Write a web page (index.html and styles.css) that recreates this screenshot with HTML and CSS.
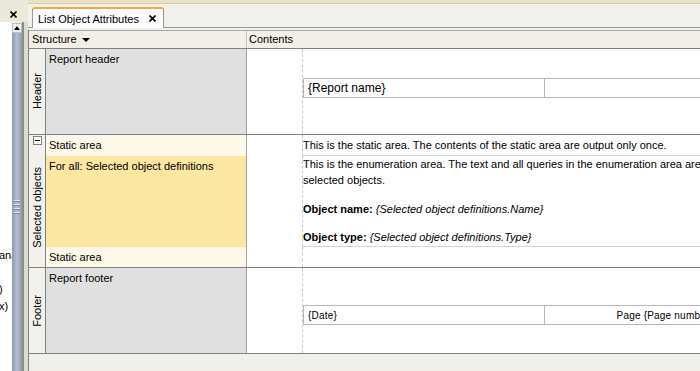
FILE: index.html
```html
<!DOCTYPE html>
<html>
<head>
<meta charset="utf-8">
<link rel="stylesheet" href="styles.css">
</head>
<body>
<div class="app">
  <aside class="side">
    <div class="side-head">
      <svg class="xicon" width="7" height="7" viewBox="0 0 7 7"><path d="M0.5 0.5L6.5 6.5M6.5 0.5L0.5 6.5" stroke="#000" stroke-width="1.6"/></svg>
    </div>
    <div class="side-body">
      <div class="side-list">
        <div class="li li-first">ana</div>
        <div class="li"></div>
        <div class="li">)</div>
        <div class="li">x)</div>
      </div>
      <div class="vscroll">
        <div class="sb-btn"><svg width="6" height="4" viewBox="0 0 6 4"><polygon points="3,0 6,4 0,4" fill="#000"/></svg></div>
        <div class="sb-thumb"><div class="grip"></div></div>
      </div>
      <div class="splitter"></div>
    </div>
  </aside>
  <main class="main">
    <div class="tabbar">
      <div class="strip"></div>
      <div class="tabrow">
        <div class="tab">
          <span>List Object Attributes</span>
          <svg width="7" height="7" viewBox="0 0 7 7"><path d="M0.5 0.5L6.5 6.5M6.5 0.5L0.5 6.5" stroke="#000" stroke-width="1.6"/></svg>
        </div>
      </div>
    </div>
    <div class="grid">
      <div class="colhead">
        <div class="ch-struct">Structure <svg class="tri" width="8" height="4" viewBox="0 0 8 4"><polygon points="0,0 8,0 4,4" fill="#000"/></svg></div>
        <div class="ch-contents">Contents</div>
      </div>

      <section class="sec sec-band">
        <div class="lbl"><span class="vtext">Header</span></div>
        <div class="rows">
          <div class="row row-band">
            <div class="struct gray">Report header</div>
            <div class="content">
              <div class="gutter"></div>
              <div class="body body-head">
                <table class="itable">
                  <tr><td class="c1 big">{Report name}</td><td class="c2"></td></tr>
                </table>
              </div>
            </div>
          </div>
        </div>
      </section>

      <section class="sec">
        <div class="lbl lbl-sel">
          <div class="minus"></div>
          <div class="vwrap"><span class="vtext">Selected objects</span></div>
        </div>
        <div class="rows">
          <div class="row">
            <div class="struct cream">Static area</div>
            <div class="content">
              <div class="gutter"></div>
              <div class="body body-line divided">This is the static area. The contents of the static area are output only once.</div>
            </div>
          </div>
          <div class="row">
            <div class="struct yellow">For all: Selected object definitions</div>
            <div class="content">
              <div class="gutter"></div>
              <div class="body body-enum divided">
                <p class="p1">This is the enumeration area. The text and all queries in the enumeration area are output for all<br>selected objects.</p>
                <p class="p2"><b>Object name:</b> <i>{Selected object definitions.Name}</i></p>
                <p class="p3"><b>Object type:</b> <i>{Selected object definitions.Type}</i></p>
              </div>
            </div>
          </div>
          <div class="row">
            <div class="struct cream">Static area</div>
            <div class="content">
              <div class="gutter"></div>
              <div class="body body-line"></div>
            </div>
          </div>
        </div>
      </section>

      <section class="sec sec-band">
        <div class="lbl"><span class="vtext">Footer</span></div>
        <div class="rows">
          <div class="row row-band">
            <div class="struct gray">Report footer</div>
            <div class="content">
              <div class="gutter"></div>
              <div class="body body-foot">
                <table class="itable">
                  <tr><td class="c1 small">{Date}</td><td class="c2 small right">Page {Page number}</td></tr>
                </table>
              </div>
            </div>
          </div>
        </div>
      </section>

      <div class="filler"></div>
    </div>
  </main>
</div>
</body>
</html>
```

FILE: styles.css
```css
html, body {
  margin: 0;
  padding: 0;
}
body {
  width: 700px;
  height: 371px;
  overflow: hidden;
  font-family: "Liberation Sans", Arial, sans-serif;
  font-size: 11px;
  color: #000;
  background: #f1f0ea;
}
.app {
  display: flex;
  width: 700px;
  height: 371px;
}

/* side panel */
.side {
  width: 28px;
  display: flex;
  flex-direction: column;
  flex-shrink: 0;
}
.side-head {
  height: 22px;
  background: #ece9d8;
  display: flex;
  justify-content: flex-end;
  padding-right: 11px;
  padding-top: 11px;
  box-sizing: border-box;
}
.side-head .xicon {
  display: block;
}
.side-body {
  flex: 1;
  display: flex;
}
.side-list {
  width: 12px;
  background: #fff;
  overflow: hidden;
  white-space: nowrap;
  flex-shrink: 0;
}
.li {
  height: 17px;
  line-height: 17px;
  margin-left: -1px;
}
.li-first {
  margin-top: 225px;
}
.vscroll {
  width: 10px;
  display: flex;
  flex-direction: column;
  flex-shrink: 0;
}
.sb-btn {
  height: 10px;
  margin-top: 1px;
  background: #eef0f4;
  border: 1px solid #b8bfcc;
  box-sizing: border-box;
  display: flex;
  align-items: center;
  justify-content: center;
}
.sb-btn svg {
  display: block;
}
.sb-thumb {
  flex: 1;
  background: linear-gradient(to right, #8f99ad, #b6bfd0 50%, #8f99ad);
  display: flex;
  justify-content: center;
}
.grip {
  width: 6px;
  height: 14px;
  margin-top: 167px;
  background: repeating-linear-gradient(to bottom, #e4e8f0 0, #e4e8f0 1px, #7d879b 1px, #7d879b 2px, transparent 2px, transparent 4px);
}
.splitter {
  width: 4px;
  background: #dedbd2;
  border-left: 2px solid #8c8c8c;
  flex-shrink: 0;
}

/* main */
.main {
  flex: 1;
  display: flex;
  flex-direction: column;
  overflow: hidden;
  min-width: 0;
}
.tabbar {
  height: 27px;
  border-bottom: 1px solid #8e97a4;
  background: #f1f0ea;
  display: flex;
  flex-direction: column;
  flex-shrink: 0;
}
.strip {
  height: 3px;
  background: #ebe2c6;
  border-bottom: 1px solid #d4ccb4;
}
.tabrow {
  flex: 1;
  display: flex;
  align-items: flex-end;
  padding-left: 4px;
}
.tab {
  height: 21px;
  box-sizing: border-box;
  margin-bottom: -1px;
  border: 1px solid #919b9c;
  border-bottom: none;
  border-top: 2px solid #f2a93b;
  border-radius: 3px 3px 0 0;
  background: #fcfcfe;
  display: flex;
  align-items: center;
  gap: 10px;
  padding: 0 7px 0 5px;
  position: relative;
}
.tab svg {
  display: block;
}

.grid {
  flex: 1;
  display: flex;
  flex-direction: column;
  border-left: 1px solid #808080;
  margin-top: 2px;
}
.colhead {
  display: flex;
  height: 17px;
  border-top: 1px solid #a8a8a8;
  border-bottom: 1px solid #808080;
  background: #f1efe8;
  line-height: 17px;
  flex-shrink: 0;
}
.ch-struct {
  width: 214px;
  padding-left: 3px;
  border-right: 1px solid #c8c8c0;
  display: flex;
  align-items: center;
  gap: 5px;
  flex-shrink: 0;
}
.tri {
  display: block;
}
.ch-contents {
  padding-left: 2px;
}

.sec {
  display: flex;
  border-bottom: 1px solid #808080;
  flex-shrink: 0;
}
.lbl {
  width: 16px;
  flex-shrink: 0;
  border-right: 1px solid #808080;
  background: #f2f1ec;
  display: flex;
  align-items: center;
  justify-content: center;
}
.lbl-sel {
  flex-direction: column;
  align-items: stretch;
  justify-content: flex-start;
}
.minus {
  width: 9px;
  height: 9px;
  box-sizing: border-box;
  border: 1px solid #808080;
  background: #fff;
  margin: 1px 0 0 4px;
  position: relative;
}
.minus::after {
  content: "";
  position: absolute;
  left: 1px;
  right: 1px;
  top: 3px;
  height: 1px;
  background: #000;
}
.vwrap {
  flex: 1;
  display: flex;
  align-items: center;
  justify-content: center;
  padding-top: 2px;
}
.vtext {
  writing-mode: vertical-rl;
  transform: rotate(180deg);
  white-space: nowrap;
  line-height: 14px;
}
.rows {
  flex: 1;
  display: flex;
  flex-direction: column;
  min-width: 0;
}
.row {
  display: flex;
}
.row-band {
  height: 85px;
}
.struct {
  width: 194px;
  padding: 3px 3px;
  line-height: 14px;
  border-right: 1px solid #a0a0a0;
  flex-shrink: 0;
}
.gray { background: #e0e0e0; }
.cream { background: #fdf8e8; }
.yellow { background: #fbe6a2; }

.content {
  flex: 1;
  display: flex;
  background: #fff;
  min-width: 0;
}
.gutter {
  width: 55px;
  border-right: 1px dashed #c8c8c8;
  flex-shrink: 0;
}
.body {
  flex: 1;
  white-space: nowrap;
  overflow: hidden;
  min-width: 0;
}
.divided {
  border-bottom: 1px solid #d4d4d4;
}
.body-line {
  height: 20px;
  line-height: 20px;
}
.body-enum {
  height: 89px;
  padding-bottom: 1px;
  box-sizing: content-box;
}
.body-enum p {
  margin: 0;
  line-height: 16px;
}
.body-enum .p2 { margin-top: 13px; }
.body-enum .p3 { margin-top: 12px; }

.body-head { padding-top: 29px; }
.body-foot { padding-top: 37px; }

.itable {
  border-collapse: collapse;
  width: 415px;
  table-layout: fixed;
}
.itable td {
  border: 1px solid #b8b8b8;
  height: 18px;
  padding: 0 4px;
  white-space: nowrap;
}
.itable .c1 { width: 232px; }
.big { font-size: 12px; }
.small { font-size: 10px; letter-spacing: 0.2px; }
.right { text-align: right; }

.filler {
  flex: 1;
  background: #f0efea;
}
```
